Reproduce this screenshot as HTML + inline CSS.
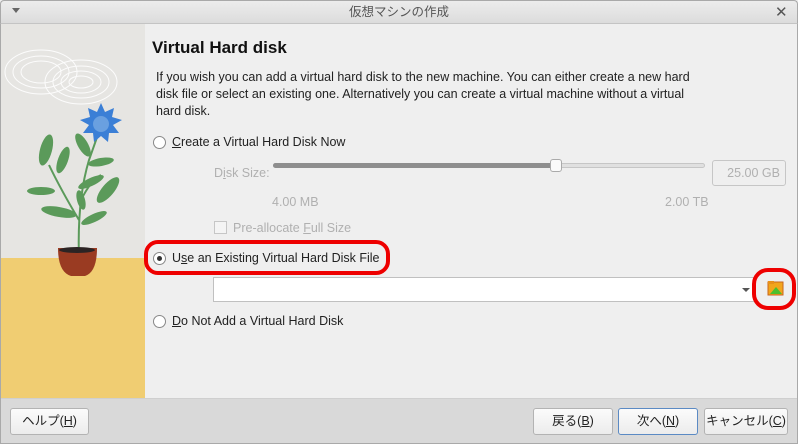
<!DOCTYPE html>
<html><head><meta charset="utf-8"><style>
*{margin:0;padding:0;box-sizing:border-box}
body{width:798px;height:444px;background:#efefef;font-family:"Liberation Sans","Noto Sans CJK JP",sans-serif;font-size:12.5px;color:#222;position:relative;overflow:hidden}
.abs{position:absolute}
.title{left:0;top:0;width:798px;height:24px;background:linear-gradient(#ececec,#dcdcdc);border:1px solid #a9a9a9;border-bottom:1px solid #c4c4c4;border-radius:4px 4px 0 0;text-align:center;line-height:23px;color:#555;font-size:12.5px}
.frame{left:0;top:24px;width:798px;height:420px;border:1px solid #a9a9a9;border-top:none}
.left{left:1px;top:24px;width:144px;height:374px;background:#e6e5e2;overflow:hidden}
.radio{width:13px;height:13px;border:1px solid #888;border-radius:50%;background:#fff}
.gray{color:#b0b0b0}
.btnbar{left:1px;top:398px;width:796px;height:45px;background:#d9d9d9;border-top:1px solid #cfcfcf}
.btn{height:27px;top:408px;border:1px solid #b3b3b3;border-radius:3px;background:linear-gradient(#fbfbfb,#ececec);text-align:center;line-height:25px;font-size:12.5px}
u{text-decoration:underline}
</style></head><body>
<div class="abs title">仮想マシンの作成</div>
<div class="abs" style="left:12px;top:8px;width:0;height:0;border-left:4px solid transparent;border-right:4px solid transparent;border-top:5px solid #666"></div>
<div class="abs" style="left:775px;top:3px;font-size:15px;color:#555">✕</div>
<div class="abs frame"></div>
<div class="abs left">
<svg width="144" height="374" viewBox="0 24 144 374">
<rect x="0" y="258" width="144" height="140" fill="#f0cd72"/>
<g fill="none" stroke="#fff" stroke-width="1" opacity=".9">
<ellipse cx="40" cy="72" rx="36" ry="22"/><ellipse cx="40" cy="72" rx="28" ry="16"/><ellipse cx="40" cy="72" rx="20" ry="11"/>
<ellipse cx="80" cy="82" rx="36" ry="22"/><ellipse cx="80" cy="82" rx="28" ry="16"/><ellipse cx="80" cy="82" rx="20" ry="11"/><ellipse cx="80" cy="82" rx="12" ry="6"/>
</g>
<g stroke="#5b9a5a" stroke-width="2" fill="none"><path d="M78 258 Q76 200 88 160 Q95 140 100 126"/><path d="M78 220 Q60 190 48 165"/><path d="M80 200 Q90 180 100 175"/></g>
<g fill="#5b9a5a">
<ellipse cx="45" cy="150" rx="6" ry="16" transform="rotate(15 45 150)"/>
<ellipse cx="62" cy="160" rx="5" ry="14" transform="rotate(20 62 160)"/>
<ellipse cx="40" cy="191" rx="14" ry="4"/>
<ellipse cx="58" cy="212" rx="18" ry="5" transform="rotate(10 58 212)"/>
<ellipse cx="82" cy="145" rx="5" ry="13" transform="rotate(-30 82 145)"/>
<ellipse cx="100" cy="162" rx="13" ry="4" transform="rotate(-10 100 162)"/>
<ellipse cx="90" cy="182" rx="14" ry="4" transform="rotate(-25 90 182)"/>
<ellipse cx="107" cy="190" rx="6" ry="16" transform="rotate(40 107 190)"/>
<ellipse cx="93" cy="218" rx="14" ry="4" transform="rotate(-25 93 218)"/>
<ellipse cx="80" cy="200" rx="4" ry="10" transform="rotate(-15 80 200)"/>
</g>
<polygon fill="#3b7fd6" points="100,103 104,112 113,108 111,117 121,120 112,125 118,133 108,133 107,142 100,136 93,142 92,133 82,133 88,125 79,120 89,117 87,108 96,112"/>
<circle cx="100" cy="124" r="8" fill="#6aa0e0"/>
<path d="M57 248 L96 248 Q96 272 84 276 L70 276 Q57 272 57 248Z" fill="#9a3b22"/>
<ellipse cx="76" cy="250" rx="18" ry="3" fill="#2c2424"/>
</svg>
</div>
<div class="abs" style="left:152px;top:38px;font-size:17px;font-weight:bold;color:#111">Virtual Hard disk</div>
<div class="abs" style="left:156px;top:69px;width:552px;line-height:17px;font-size:12.5px">If you wish you can add a virtual hard disk to the new machine. You can either create a new hard disk file or select an existing one. Alternatively you can create a virtual machine without a virtual hard disk.</div>
<div class="abs radio" style="left:153px;top:136px"></div>
<div class="abs" style="left:172px;top:135px"><u>C</u>reate a Virtual Hard Disk Now</div>
<div class="abs gray" style="left:214px;top:166px">D<u>i</u>sk Size:</div>
<div class="abs" style="left:273px;top:163px;width:432px;height:5px;background:#e0e0e0;border:1px solid #c6c6c6;border-radius:3px"></div>
<div class="abs" style="left:273px;top:163px;width:284px;height:5px;background:#8e8e8e;border-radius:3px"></div>
<div class="abs" style="left:550px;top:159px;width:12px;height:13px;background:#fafafa;border:1px solid #aaa;border-radius:3px"></div>
<div class="abs" style="left:712px;top:160px;width:74px;height:26px;border:1px solid #c6c6c6;border-radius:3px;text-align:right;padding-right:5px;line-height:24px" ><span class="gray">25.00 GB</span></div>
<div class="abs gray" style="left:272px;top:195px">4.00 MB</div>
<div class="abs gray" style="left:665px;top:195px">2.00 TB</div>
<div class="abs" style="left:214px;top:221px;width:13px;height:13px;border:1px solid #c6c6c6;background:#f4f4f4"></div>
<div class="abs gray" style="left:233px;top:221px">Pre-allocate <u>F</u>ull Size</div>
<div class="abs" style="left:144px;top:240px;width:246px;height:35px;border:4px solid #ee0000;border-radius:14px"></div>
<div class="abs radio" style="left:153px;top:252px"><div style="width:5px;height:5px;background:#333;border-radius:50%;margin:3px"></div></div>
<div class="abs" style="left:172px;top:251px">U<u>s</u>e an Existing Virtual Hard Disk File</div>
<div class="abs" style="left:213px;top:277px;width:543px;height:25px;border:1px solid #c0c0c0;background:#fff"></div>
<div class="abs" style="left:742px;top:288px;border-left:4px solid transparent;border-right:4px solid transparent;border-top:4px solid #555"></div>
<div class="abs" style="left:752px;top:268px;width:44px;height:42px;border:4px solid #ee0000;border-radius:16px"></div>
<svg class="abs" style="left:767px;top:280px" width="17" height="16"><rect x="1" y="2" width="15" height="13" fill="#f2a51c" stroke="#c9661a"/><rect x="1" y="1" width="6" height="3" fill="#e8901a"/><path d="M3 14 L9 7 L15 14Z" fill="#4cbf2d"/></svg>
<div class="abs radio" style="left:153px;top:315px"></div>
<div class="abs" style="left:172px;top:314px"><u>D</u>o Not Add a Virtual Hard Disk</div>
<div class="abs btnbar"></div>
<div class="abs btn" style="left:10px;width:79px">ヘルプ(<u>H</u>)</div>
<div class="abs btn" style="left:533px;width:80px">戻る(<u>B</u>)</div>
<div class="abs btn" style="left:618px;width:80px;border-color:#5b8ac4">次へ(<u>N</u>)</div>
<div class="abs btn" style="left:704px;width:84px">キャンセル(<u>C</u>)</div>
</body></html>
